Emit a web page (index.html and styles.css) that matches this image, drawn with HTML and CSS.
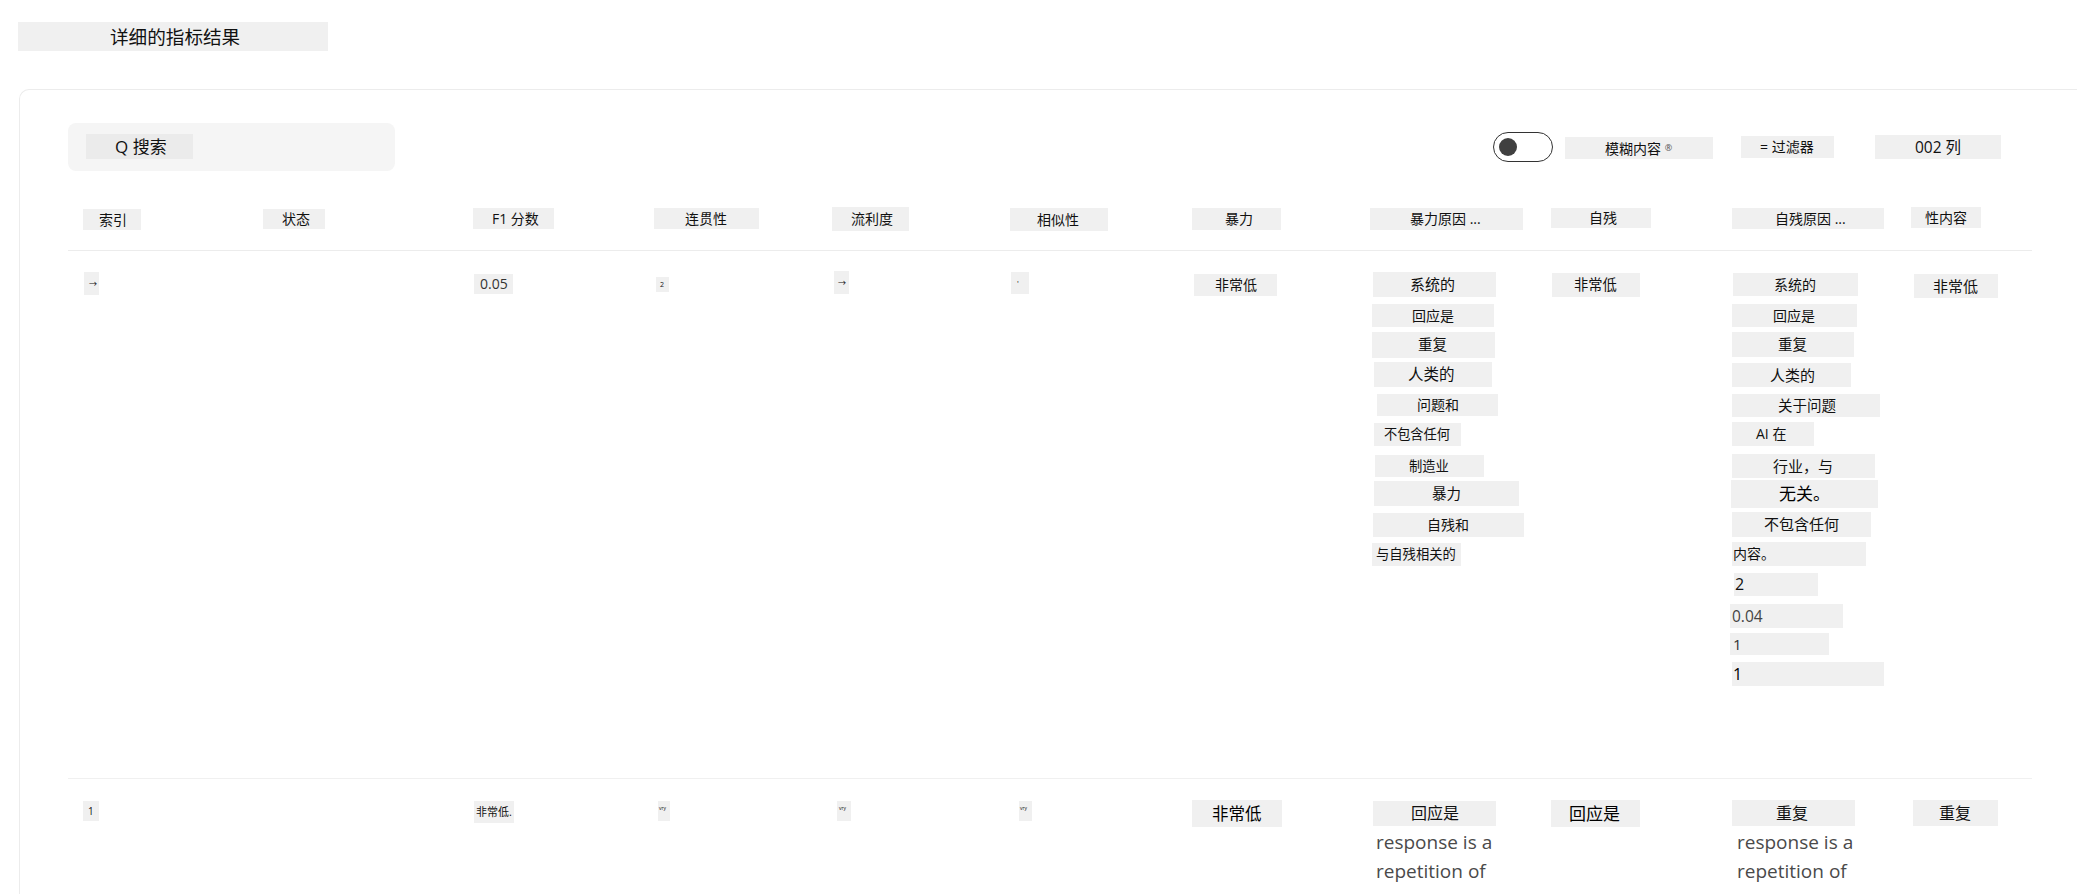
FILE: index.html
```html
<!DOCTYPE html>
<html lang="zh-CN">
<head>
<meta charset="utf-8">
<title>详细的指标结果</title>
<link rel="stylesheet" href="styles.css">
</head>
<body>
<h1 class="title chip">详细的指标结果</h1>
<section class="card">
  <div class="toolbar">
    <div class="search"><span class="search-label chip">Q 搜索</span></div>
    <div class="controls">
      <span class="toggle"><span class="knob"></span></span>
      <span class="chip ctl-blur">模糊内容 <span class="mark">®</span></span>
      <span class="chip ctl-filter">= 过滤器</span>
      <span class="chip ctl-cols">002 列</span>
    </div>
  </div>
  <div class="grid head">
    <div class="cell"><span class="chip h1">索引</span></div>
    <div class="cell"><span class="chip h2">状态</span></div>
    <div class="cell"><span class="chip h3">F1 分数</span></div>
    <div class="cell"><span class="chip h4">连贯性</span></div>
    <div class="cell"><span class="chip h5">流利度</span></div>
    <div class="cell"><span class="chip h6">相似性</span></div>
    <div class="cell"><span class="chip h7">暴力</span></div>
    <div class="cell"><span class="chip h8">暴力原因 ...</span></div>
    <div class="cell"><span class="chip h9">自残</span></div>
    <div class="cell"><span class="chip h10">自残原因 ...</span></div>
    <div class="cell"><span class="chip h11">性内容</span></div>
  </div>
  <div class="grid row row-one">
    <div class="cell"><span class="chip a1">→</span></div>
    <div class="cell"></div>
    <div class="cell"><span class="chip a3">0.05</span></div>
    <div class="cell"><span class="chip a4">2</span></div>
    <div class="cell"><span class="chip a5">→</span></div>
    <div class="cell"><span class="chip a6">'</span></div>
    <div class="cell"><span class="chip a7">非常低</span></div>
    <div class="cell stack reason-v">
      <span class="chip">系统的</span>
      <span class="chip">回应是</span>
      <span class="chip">重复</span>
      <span class="chip">人类的</span>
      <span class="chip">问题和</span>
      <span class="chip">不包含任何</span>
      <span class="chip">制造业</span>
      <span class="chip">暴力</span>
      <span class="chip">自残和</span>
      <span class="chip">与自残相关的</span>
    </div>
    <div class="cell"><span class="chip a9">非常低</span></div>
    <div class="cell stack reason-s">
      <span class="chip">系统的</span>
      <span class="chip">回应是</span>
      <span class="chip">重复</span>
      <span class="chip">人类的</span>
      <span class="chip">关于问题</span>
      <span class="chip">AI 在</span>
      <span class="chip">行业，与</span>
      <span class="chip">无关。</span>
      <span class="chip">不包含任何</span>
      <span class="chip">内容。</span>
      <span class="chip">2</span>
      <span class="chip">0.04</span>
      <span class="chip">1</span>
      <span class="chip">1</span>
    </div>
    <div class="cell"><span class="chip a11">非常低</span></div>
  </div>
  <div class="grid row row-two">
    <div class="cell"><span class="chip b1">1</span></div>
    <div class="cell"></div>
    <div class="cell"><span class="chip b3">非常低.</span></div>
    <div class="cell"><span class="chip b4">vry</span></div>
    <div class="cell"><span class="chip b5">vry</span></div>
    <div class="cell"><span class="chip b6">vry</span></div>
    <div class="cell"><span class="chip b7">非常低</span></div>
    <div class="cell stack">
      <span class="chip b8">回应是</span>
      <p class="prose prose-v">response is a<br>repetition of</p>
    </div>
    <div class="cell"><span class="chip b9">回应是</span></div>
    <div class="cell stack">
      <span class="chip b10">重复</span>
      <p class="prose prose-s">response is a<br>repetition of</p>
    </div>
    <div class="cell"><span class="chip b11">重复</span></div>
  </div>
</section>
</body>
</html>
```
FILE: styles.css
```css
* { box-sizing: border-box; }

html, body {
  margin: 0;
  height: 894px;
  overflow: hidden;
  background: #fff;
}

body {
  font-family: "Open Sans", "Noto Sans CJK SC", sans-serif;
  color: #111;
  padding-top: 22px;
}

.chip {
  display: block;
  background: #f0f0f0;
  white-space: nowrap;
  font-size: 14px;
}

.title {
  width: 310px;
  height: 29px;
  margin: 0 0 38px 18px;
  padding-left: 92px;
  font-size: 18.6px;
  font-weight: 400;
  line-height: 29px;
}

.card {
  width: calc(100% - 19px);
  height: 805px;
  margin-left: 19px;
  padding: 33px 0 0 48px;
  border: 1px solid #ececec;
  border-width: 1px 0 0 1px;
  border-top-left-radius: 10px;
  background: #fff;
}

.toolbar {
  width: 1964px;
  height: 48px;
  padding-right: 31px;
  display: flex;
  justify-content: space-between;
  align-items: center;
}

.search {
  width: 327px;
  height: 48px;
  padding: 11px 0 0 18px;
  background: #f5f5f5;
  border-radius: 8px;
}

.search-label {
  width: 107px;
  height: 25px;
  padding-left: 29px;
  background: #ebebeb;
  font-size: 17px;
  line-height: 25px;
}

.controls {
  display: flex;
  align-items: center;
}

.toggle {
  width: 60px;
  height: 30px;
  padding: 5px;
  border: 1px solid #333;
  border-radius: 15px;
  background: #fff;
}

.knob {
  display: block;
  width: 18px;
  height: 18px;
  border-radius: 50%;
  background: #404040;
}

.ctl-blur {
  width: 148px;
  height: 22px;
  margin: 2px 0 0 12px;
  padding-left: 40px;
  line-height: 22px;
}

.mark {
  font-size: 9px;
  vertical-align: 3px;
  color: #555;
}

.ctl-filter {
  width: 93px;
  height: 22px;
  margin-left: 28px;
  padding-left: 19px;
  line-height: 22px;
}

.ctl-cols {
  width: 126px;
  height: 24px;
  margin-left: 41px;
  padding-left: 40px;
  font-size: 15.5px;
  line-height: 24px;
}

.grid {
  width: 1964px;
  padding-left: 15px;
  display: grid;
  grid-template-columns: 180px 210px 181px 178px 178px 182px 178px 181px 181px 179px 121px;
  align-items: start;
}

.head {
  height: 44px;
  margin-top: 36px;
  border-bottom: 1px solid #ececec;
}

.row { border-bottom: 1px solid #f0f0f0; }

.row-one { height: 528px; padding-top: 20px; }

.row-two { border-bottom: 0; padding-top: 21px; }

.stack { display: flex; flex-direction: column; align-items: flex-start; }

/* header labels */
.h1 { width: 58px; height: 21px; margin-top: 2px; padding-left: 16px; line-height: 21px; }
.h2 { width: 62px; height: 20px; margin-top: 2px; padding-left: 19px; line-height: 20px; }
.h3 { width: 81px; height: 21px; margin-top: 1px; padding-left: 19px; line-height: 21px; }
.h4 { width: 105px; height: 21px; margin-top: 1px; padding-left: 31px; line-height: 21px; }
.h5 { width: 77px; height: 24px; padding-left: 19px; line-height: 24px; }
.h6 { width: 98px; height: 23px; margin-top: 1px; padding-left: 27px; line-height: 23px; }
.h7 { width: 89px; height: 22px; margin-top: 1px; padding-left: 33px; line-height: 22px; }
.h8 { width: 153px; height: 22px; margin-top: 1px; padding-left: 40px; line-height: 22px; }
.h9 { width: 100px; height: 20px; margin-top: 1px; padding-left: 38px; line-height: 20px; }
.h10 { width: 152px; height: 21px; margin-top: 1px; padding-left: 43px; line-height: 21px; }
.h11 { width: 70px; height: 21px; padding-left: 14px; line-height: 21px; }

/* first row single values */
.a1 { width: 15px; height: 23px; margin-left: 1px; margin-top: 1px; padding-left: 5px; font-size: 8px; line-height: 23px; }
.a3 { width: 39px; height: 20px; margin: 3px 0 0 1px; padding-left: 6px; line-height: 20px; color: #333; }
.a4 { width: 13px; height: 15px; margin: 6px 0 0 2px; padding-left: 4px; font-size: 7px; line-height: 15px; }
.a5 { width: 15px; height: 23px; margin-left: 2px; padding-left: 4px; font-size: 8px; line-height: 23px; }
.a6 { width: 18px; height: 22px; margin: 1px 0 0 1px; padding-left: 6px; font-size: 8px; line-height: 22px; }
.a7 { width: 83px; height: 22px; margin: 3px 0 0 2px; padding-left: 21px; line-height: 22px; }
.a9 { width: 88px; height: 24px; margin: 2px 0 0 1px; padding-left: 22px; font-size: 14.3px; line-height: 24px; }
.a11 { width: 84px; height: 24px; margin: 3px 0 0 3px; padding-left: 19px; font-size: 15px; line-height: 24px; }

/* violence reason lines */
.reason-v .chip:nth-child(1) { width: 123px; height: 25px; margin: 1px 0 0 3px; padding-left: 37px; font-size: 15px; line-height: 25px; }
.reason-v .chip:nth-child(2) { width: 122px; height: 23px; margin: 7px 0 0 2px; padding-left: 40px; line-height: 23px; }
.reason-v .chip:nth-child(3) { width: 123px; height: 26px; margin: 5px 0 0 2px; padding-left: 46px; font-size: 14.5px; line-height: 26px; }
.reason-v .chip:nth-child(4) { width: 118px; height: 25px; margin: 4px 0 0 4px; padding-left: 34px; font-size: 15.5px; line-height: 25px; }
.reason-v .chip:nth-child(5) { width: 121px; height: 22px; margin: 7px 0 0 7px; padding-left: 40px; line-height: 22px; }
.reason-v .chip:nth-child(6) { width: 87px; height: 23px; margin: 7px 0 0 4px; padding-left: 10px; font-size: 13.2px; line-height: 23px; }
.reason-v .chip:nth-child(7) { width: 109px; height: 22px; margin: 9px 0 0 5px; padding-left: 34px; font-size: 13.3px; line-height: 22px; }
.reason-v .chip:nth-child(8) { width: 145px; height: 25px; margin: 4px 0 0 4px; padding-left: 58px; font-size: 14.5px; line-height: 25px; }
.reason-v .chip:nth-child(9) { width: 151px; height: 24px; margin: 7px 0 0 3px; padding-left: 54px; line-height: 24px; }
.reason-v .chip:nth-child(10) { width: 89px; height: 23px; margin: 6px 0 0 2px; padding-left: 4px; font-size: 13.3px; line-height: 23px; }

/* self-harm reason lines */
.reason-s .chip:nth-child(1) { width: 125px; height: 23px; margin: 2px 0 0 1px; padding-left: 41px; line-height: 23px; }
.reason-s .chip:nth-child(2) { width: 125px; height: 23px; margin-top: 8px; padding-left: 41px; line-height: 23px; }
.reason-s .chip:nth-child(3) { width: 122px; height: 25px; margin-top: 5px; padding-left: 46px; font-size: 14.5px; line-height: 25px; }
.reason-s .chip:nth-child(4) { width: 119px; height: 24px; margin-top: 6px; padding-left: 38px; font-size: 15px; line-height: 24px; }
.reason-s .chip:nth-child(5) { width: 148px; height: 23px; margin-top: 7px; padding-left: 46px; font-size: 14.5px; line-height: 23px; }
.reason-s .chip:nth-child(6) { width: 82px; height: 24px; margin-top: 5px; padding-left: 24px; line-height: 24px; }
.reason-s .chip:nth-child(7) { width: 143px; height: 24px; margin-top: 8px; padding-left: 41px; font-size: 15px; line-height: 24px; }
.reason-s .chip:nth-child(8) { width: 147px; height: 28px; margin: 2px 0 0 -1px; padding-left: 48px; font-size: 17px; color: #000; line-height: 28px; }
.reason-s .chip:nth-child(9) { width: 139px; height: 25px; margin-top: 4px; padding-left: 32px; font-size: 15px; line-height: 25px; }
.reason-s .chip:nth-child(10) { width: 134px; height: 24px; margin-top: 5px; padding-left: 1px; line-height: 24px; }
.reason-s .chip:nth-child(11) { width: 84px; height: 23px; margin: 7px 0 0 2px; padding-left: 1px; font-size: 16px; line-height: 23px; }
.reason-s .chip:nth-child(12) { width: 113px; height: 24px; margin: 8px 0 0 -2px; padding-left: 2px; font-size: 15.5px; line-height: 24px; color: #444; }
.reason-s .chip:nth-child(13) { width: 99px; height: 22px; margin: 5px 0 0 -2px; padding-left: 3px; font-size: 15px; line-height: 22px; color: #333; }
.reason-s .chip:nth-child(14) { width: 152px; height: 24px; margin-top: 7px; padding-left: 1px; font-size: 16px; color: #000; line-height: 24px; }

/* second row */
.b1 { width: 16px; height: 20px; margin-top: 1px; padding-left: 5px; font-size: 10px; line-height: 20px; }
.b3 { width: 40px; height: 22px; margin: 1px 0 0 1px; padding-left: 2px; font-size: 11px; line-height: 22px; }
.b4 { width: 12px; height: 20px; margin: 1px 0 0 4px; padding-left: 1px; font-size: 5px; line-height: 14px; }
.b5 { width: 14px; height: 20px; margin: 1px 0 0 5px; padding-left: 2px; font-size: 5px; line-height: 14px; }
.b6 { width: 13px; height: 20px; margin: 1px 0 0 9px; padding-left: 1px; font-size: 5px; line-height: 14px; }
.b7 { width: 90px; height: 27px; padding-left: 20px; font-size: 16.5px; color: #000; line-height: 27px; }
.b8 { width: 123px; height: 25px; margin: 1px 0 0 3px; padding-left: 38px; font-size: 16px; line-height: 25px; }
.b9 { width: 89px; height: 27px; padding-left: 18px; font-size: 17px; color: #000; line-height: 27px; }
.b10 { width: 123px; height: 26px; padding-left: 44px; font-size: 16px; line-height: 26px; }
.b11 { width: 85px; height: 26px; margin-left: 2px; padding-left: 26px; font-size: 16px; line-height: 26px; }

.prose {
  margin: 2px 0 0;
  font-size: 19px;
  line-height: 29px;
  color: #4a4a4a;
  white-space: nowrap;
}

.prose-v { margin-left: 6px; }
.prose-s { margin-left: 5px; }
```
